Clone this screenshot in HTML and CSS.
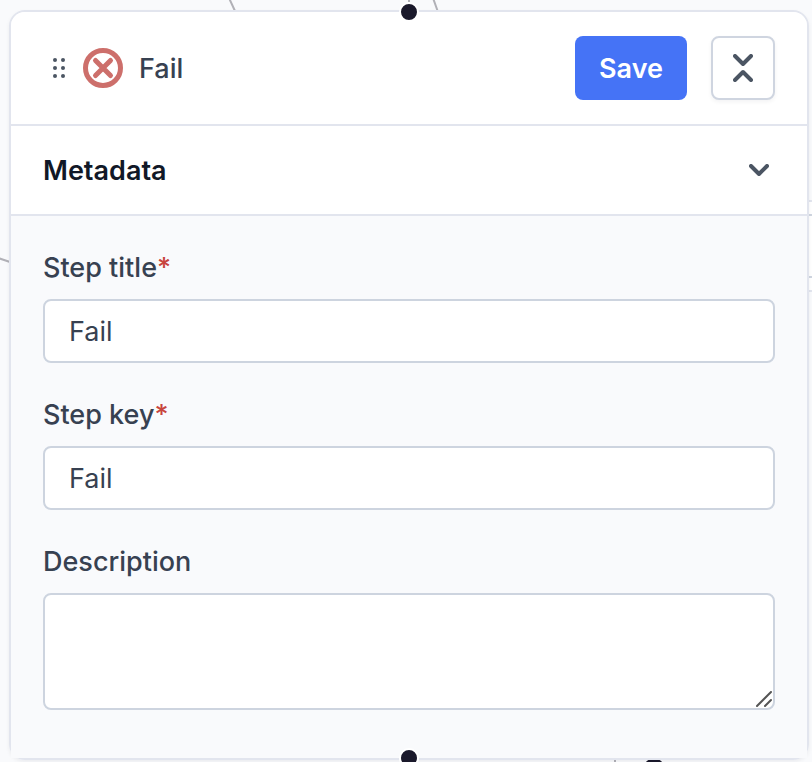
FILE: index.html
```html
<!DOCTYPE html>
<html lang="en">
<head>
    <meta charset="UTF-8">
    <meta name="viewport" content="width=device-width, initial-scale=1.0">
    <title>Fail</title>
    <link rel="stylesheet" href="styles.css">
</head>
<body>
    <div class="canvas">
        <svg class="edges" width="812" height="762" viewBox="0 0 812 762" fill="none" stroke="#b1b1b7" stroke-width="2" aria-hidden="true">
            <path d="M229 -2L235 11M433 -2L438 12M-2 258L10 262M409 -8V2M615 760V770"/>
            <rect x="780" y="201" width="80" height="90" fill="#fff" stroke="#e2e5ee"/>
            <path d="M780 215H860M780 277H860" stroke="#cfd5e0"/>
            <circle cx="654" cy="768" r="10" fill="#1a192b" stroke="none"/>
        </svg>

        <form class="node">
            <span class="handle handle-top"></span>

            <header class="node-header">
                <svg class="grip" width="12" height="20" viewBox="0 0 12 20" fill="#4b5563" aria-hidden="true">
                    <circle cx="2" cy="2" r="2"/>
                    <circle cx="10" cy="2" r="2"/>
                    <circle cx="2" cy="10" r="2"/>
                    <circle cx="10" cy="10" r="2"/>
                    <circle cx="2" cy="18" r="2"/>
                    <circle cx="10" cy="18" r="2"/>
                </svg>
                <svg class="fail-icon" width="40" height="40" viewBox="0 0 40 40" fill="none" stroke="#cd6f6b" stroke-width="5" stroke-linecap="round" aria-hidden="true">
                    <circle cx="20" cy="20" r="17.5"/>
                    <path d="M12.5 12.5L27.5 27.5M27.5 12.5L12.5 27.5"/>
                </svg>
                <span class="node-name">Fail</span>
                <button type="button" class="save">Save</button>
                <button type="button" class="collapse" aria-label="Collapse">
                    <svg width="20" height="28" viewBox="0 0 20 28" fill="none" stroke="#4b5563" stroke-width="4" stroke-linecap="round" stroke-linejoin="round">
                        <path d="M2 2L10 10L18 2M2 26L10 18L18 26"/>
                    </svg>
                </button>
            </header>

            <button type="button" class="section-toggle" aria-expanded="true">
                Metadata
                <svg width="20" height="12" viewBox="0 0 20 12" fill="none" stroke="#4b5563" stroke-width="4" stroke-linecap="round" stroke-linejoin="round" aria-hidden="true">
                    <path d="M2 2L10 10L18 2"/>
                </svg>
            </button>

            <div class="fields">
                <div class="field">
                    <label for="step-title">Step title<span class="required">*</span></label>
                    <input type="text" id="step-title" value="Fail">
                </div>
                <div class="field">
                    <label for="step-key">Step key<span class="required">*</span></label>
                    <input type="text" id="step-key" value="Fail">
                </div>
                <div class="field">
                    <label for="description">Description</label>
                    <div class="textarea-wrap">
                        <textarea id="description"></textarea>
                        <svg class="resizer" width="16" height="16" viewBox="0 0 16 16" stroke="#555" stroke-width="2" stroke-linecap="round" aria-hidden="true">
                            <path d="M1 15L15 1M9 15L15 9"/>
                        </svg>
                    </div>
                </div>
            </div>

            <span class="handle handle-bottom"></span>
        </form>
    </div>
</body>
</html>
```

FILE: styles.css
```css
* {
    box-sizing: border-box;
}

body {
    margin: 0;
    font-family: Inter, "Liberation Sans", sans-serif;
    font-size: 27px;
    color: #374151;
    background-color: #f9fafc;
}

.canvas {
    position: relative;
    min-height: 100vh;
    padding: 10px 3px 2px 9px;
    overflow: hidden;
}

.edges {
    position: absolute;
    top: 0;
    left: 0;
}

.node {
    position: relative;
    border: 2px solid #e2e5ee;
    border-radius: 16px;
    box-shadow: 0 2px 4px rgba(16, 24, 40, 0.06);
}

.handle {
    position: absolute;
    left: 50%;
    width: 20px;
    height: 20px;
    border: 2px solid #fff;
    border-radius: 50%;
    background-color: #1a192b;
    transform: translateX(-50%);
}

.handle-top {
    top: -10px;
}

.handle-bottom {
    bottom: -10px;
}

.node-header {
    display: flex;
    align-items: center;
    padding: 24px 32px 24px 42px;
    border-bottom: 2px solid #e2e5ee;
    border-radius: 14px 14px 0 0;
    background-color: #fff;
}

.fail-icon {
    margin: 0 16px 0 18px;
}

.node-name {
    flex: 1;
    font-weight: 500;
}

button,
input,
textarea {
    font: inherit;
    color: inherit;
}

button {
    cursor: pointer;
}

.save {
    height: 64px;
    margin-right: 24px;
    padding: 0 24px;
    border: 0;
    border-radius: 8px;
    font-weight: 600;
    color: #fff;
    background-color: #4573f6;
}

.collapse {
    display: flex;
    align-items: center;
    justify-content: center;
    width: 64px;
    height: 64px;
    padding: 0;
    border: 2px solid #cfd5e0;
    border-radius: 8px;
    background-color: #fff;
    box-shadow: 0 2px 4px rgba(16, 24, 40, 0.05);
}

.section-toggle {
    display: flex;
    align-items: center;
    justify-content: space-between;
    width: 100%;
    height: 90px;
    padding: 0 38px 0 32px;
    border: 0;
    border-bottom: 2px solid #e2e5ee;
    font-weight: 600;
    color: #111827;
    background-color: #fff;
}

.fields {
    display: flex;
    flex-direction: column;
    gap: 32px;
    padding: 32px 32px 48px;
    background-color: #f9fafc;
}

.field {
    display: flex;
    flex-direction: column;
    gap: 12px;
}

label {
    font-weight: 500;
    line-height: 39px;
}

.required {
    color: #c8443d;
}

input,
textarea {
    display: block;
    width: 100%;
    border: 2px solid #cdd4df;
    border-radius: 8px;
    background-color: #fff;
}

input {
    height: 64px;
    padding: 0 24px;
}

.textarea-wrap {
    position: relative;
}

textarea {
    height: 117px;
    padding: 12px 24px;
    resize: none;
}

.resizer {
    position: absolute;
    right: 3px;
    bottom: 3px;
    pointer-events: none;
}
```
